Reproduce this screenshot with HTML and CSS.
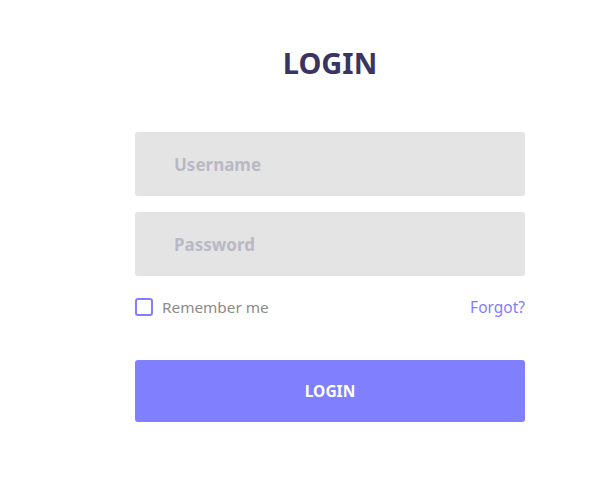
FILE: index.html
```html
<!DOCTYPE html>
<html lang="en">
<head>
    <meta charset="UTF-8">
    <meta name="viewport" content="width=device-width, initial-scale=1.0">
    <title>Login</title>
    <link rel="stylesheet" href="styles.css">
</head>
<body>
    <!-- Login form -->
    <div class="login-wrap">
        <h1 class="login-title">LOGIN</h1>
        <form class="login-form">
            <input type="text" class="field" placeholder="Username">
            <input type="password" class="field" placeholder="Password">
            <div class="options">
                <label class="remember">
                    <span class="check"></span>
                    Remember me
                </label>
                <a href="#" class="forgot">Forgot?</a>
            </div>
            <button type="button" class="login-btn">LOGIN</button>
        </form>
    </div>
</body>
</html>
```

FILE: styles.css
```css
/* Global Styles */
* {
    margin: 0;
    padding: 0;
    box-sizing: border-box;
}

body {
    font-family: "Noto Sans", "Open Sans", sans-serif;
    background-color: #fff;
    color: #333;
}

.login-wrap {
    width: 390px;
    margin-left: 135px;
    padding-top: 42px;
}

.login-title {
    text-align: center;
    font-size: 29px;
    font-weight: 700;
    color: #3a3462;
    line-height: 42px;
    margin-bottom: 48px;
}

.login-form {
    display: flex;
    flex-direction: column;
}

.field {
    height: 64px;
    border: none;
    border-radius: 3px;
    background-color: #e4e4e4;
    padding-left: 39px;
    font-family: inherit;
    font-size: 17px;
    font-weight: 700;
    color: #555;
    margin-bottom: 16px;
    outline: none;
}

.field::placeholder {
    color: #b9b9c6;
}

.options {
    display: flex;
    justify-content: space-between;
    align-items: center;
    margin-top: 4px;
    height: 22px;
}

.remember {
    display: flex;
    align-items: center;
    gap: 9px;
    font-size: 15.3px;
    color: #8b8b8b;
}

.check {
    width: 18px;
    height: 18px;
    border: 2px solid #8080ff;
    border-radius: 3px;
}

.forgot {
    font-size: 15.5px;
    color: #8080ff;
    text-decoration: none;
}

.login-btn {
    margin-top: 42px;
    height: 62px;
    border: none;
    border-radius: 3px;
    background-color: #8080ff;
    color: #fff;
    font-family: inherit;
    font-size: 15.5px;
    font-weight: 700;
}
```
